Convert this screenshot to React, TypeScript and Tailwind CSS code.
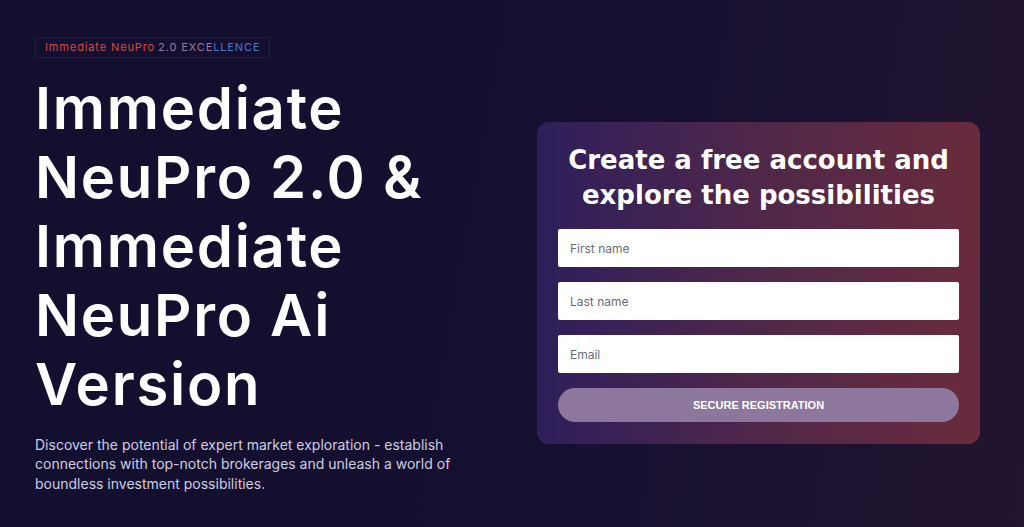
export default function App() {
  return (
    <div className="min-h-[527px] w-full bg-[linear-gradient(100deg,#130f2e_0%,#150f30_50%,#1c1230_80%,#22152f_100%)] font-['Inter',sans-serif] text-white">
      <div className="flex items-start px-[35px] pt-[33px]">
        <div className="w-[470px] shrink-0">
          <div className="inline-flex h-[21px] items-center rounded-[3px] border border-[#221d42] bg-[#140f30] px-[9px] text-[11px] tracking-[0.08em]">
            <span className="text-[#d24a45]">Immediate NeuPro </span>
            <span className="ml-[3px] text-[#9c7a9a]">2.0 EXCE</span>
            <span className="text-[#4c79c8]">LLENCE</span>
          </div>
          <h1 className="mt-[16px] text-[58px] font-semibold leading-[69px] tracking-[0.03em]">
            Immediate NeuPro 2.0 &amp; Immediate NeuPro Ai Version
          </h1>
          <p className="mt-[16px] w-[420px] text-[14px] leading-[19.5px] text-[#cfcde0]">
            Discover the potential of expert market exploration - establish connections with top-notch brokerages and unleash a world of boundless investment possibilities.
          </p>
        </div>
        <div className="ml-[32px] mt-[89px] w-[443px] rounded-[12px] bg-[linear-gradient(90deg,#2d1f5a_0%,#3f2353_25%,#522848_55%,#6a2b3c_100%)] px-[21px] pb-[22px] pt-[21px]">
          <h2 className="text-center font-['DejaVu_Sans',sans-serif] text-[26px] font-bold leading-[35px]">
            Create a free account and explore the possibilities
          </h2>
          <form className="mt-[16px] flex flex-col gap-[15px]">
            <input
              placeholder="First name"
              className="h-[38px] w-full rounded-[2px] bg-white px-[12px] text-[12px] text-[#333] placeholder:text-[#6b6b78] outline-none"
            />
            <input
              placeholder="Last name"
              className="h-[38px] w-full rounded-[2px] bg-white px-[12px] text-[12px] text-[#333] placeholder:text-[#6b6b78] outline-none"
            />
            <input
              placeholder="Email"
              className="h-[38px] w-full rounded-[2px] bg-white px-[12px] text-[12px] text-[#333] placeholder:text-[#6b6b78] outline-none"
            />
            <button
              type="button"
              className="h-[34px] w-full rounded-full bg-[#8d779c] font-['Liberation_Sans',sans-serif] text-[11px] font-bold text-white"
            >
              SECURE REGISTRATION
            </button>
          </form>
        </div>
      </div>
    </div>
  );
}
